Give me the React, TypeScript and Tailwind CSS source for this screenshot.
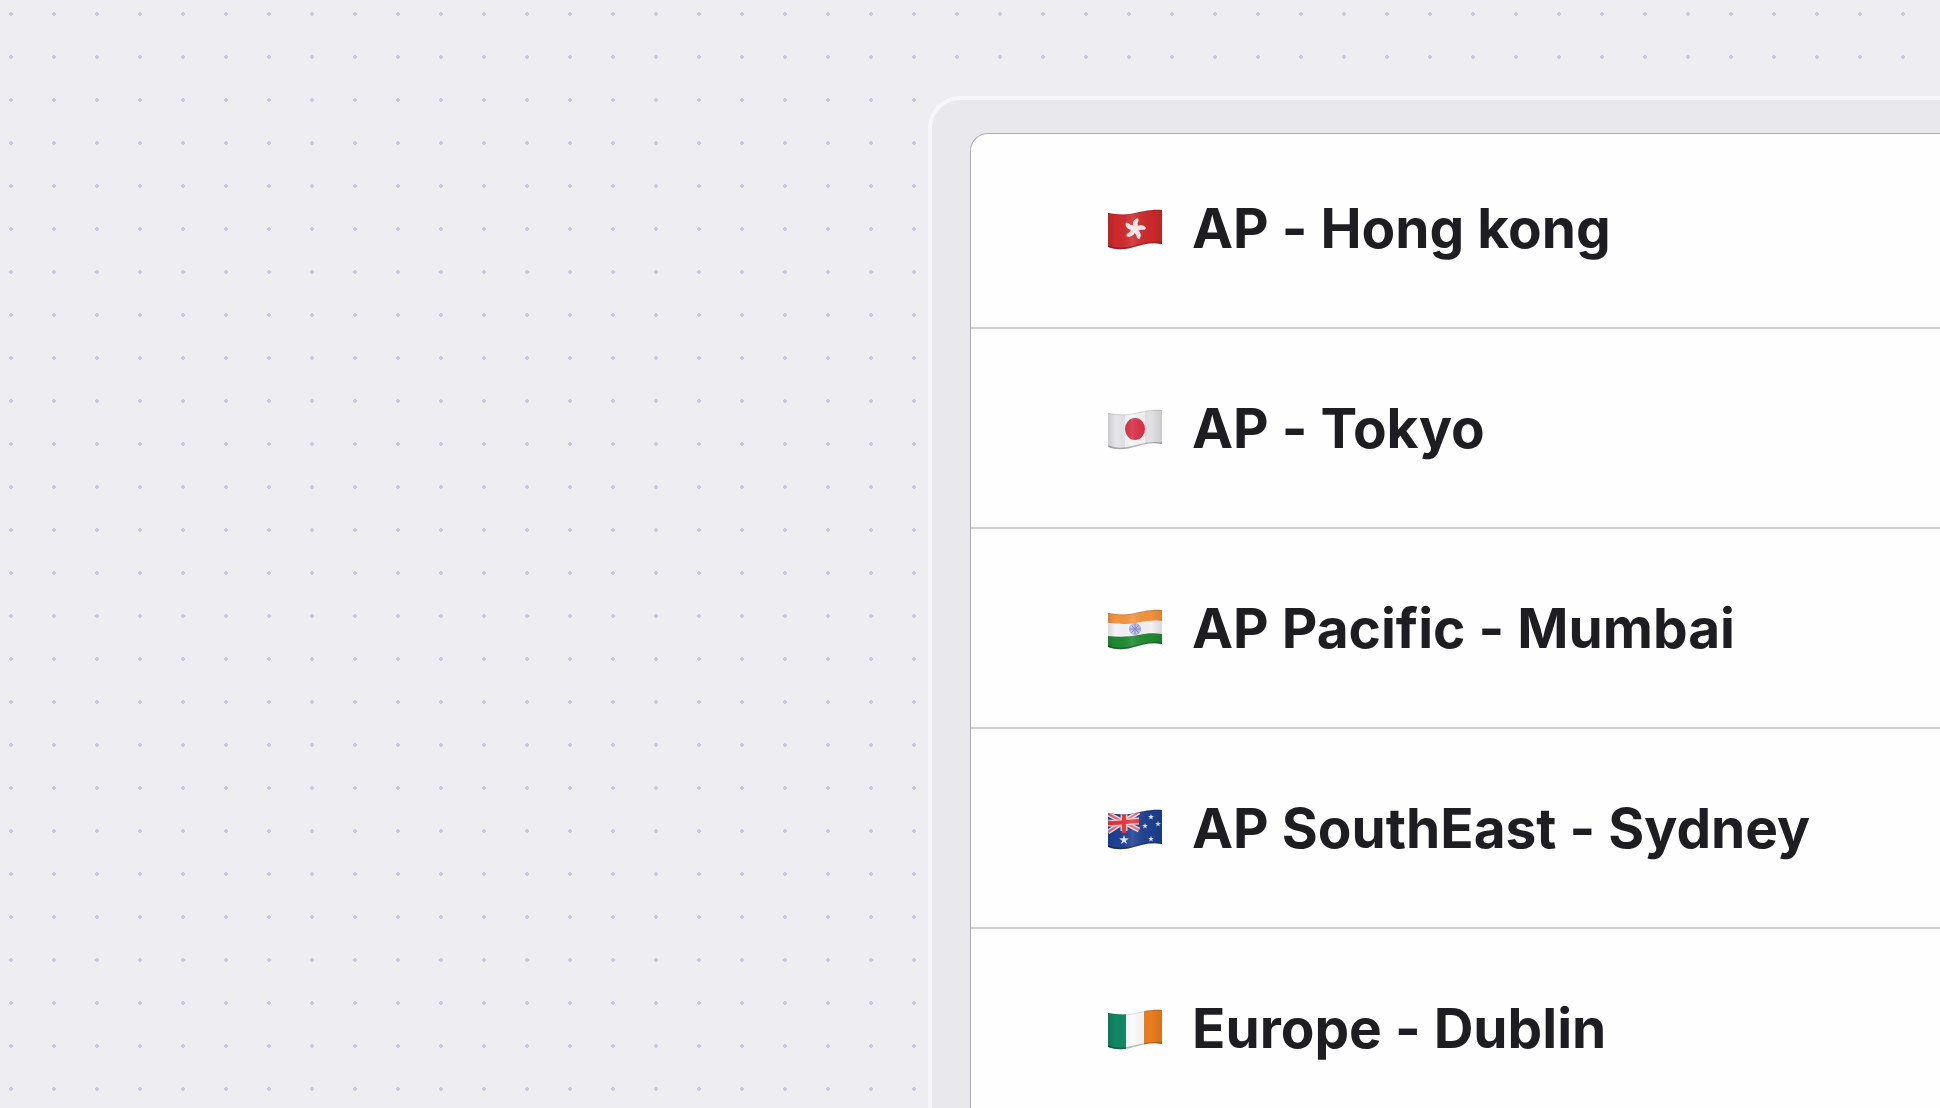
import { useId } from "react";
import type { ReactNode } from "react";

interface Region {
  name: string;
  flag: ReactNode;
}

const STAR = "0,-1 .24,-.33 .95,-.31 .38,.13 .59,.81 0,.4 -.59,.81 -.38,.13 -.95,-.31 -.24,-.33";

const HongKong = () => (
  <>
    <rect width="54" height="44" fill="#cf2a2c" />
    <g fill="#fbe9ea" transform="translate(27 20)">
      {[0, 72, 144, 216, 288].map((angle) => (
        <path
          key={angle}
          d="M0 0C-4 -3 -4 -9 1 -11C4 -9 1 -7 2 -5C3 -3 2 0 0 0Z"
          transform={`rotate(${angle + 8})`}
        />
      ))}
    </g>
  </>
);

const Japan = () => (
  <>
    <rect width="54" height="44" fill="#e6e6e8" />
    <rect x="17" width="20" height="44" fill="#f6f6f7" />
    <ellipse cx="27" cy="20" rx="10" ry="11" fill="#d92b45" />
  </>
);

const India = () => (
  <>
    <rect width="54" height="44" fill="#f5f5fa" />
    <path d="M0 0H54V12C38 10 30 15 18 15C10 15 6 14 0 14Z" fill="#f59440" />
    <path d="M0 27C10 28 20 28 30 26C40 24 46 24 54 25V44H0Z" fill="#1f8b32" />
    <circle cx="27" cy="20" r="5.5" fill="#b9bfe6" stroke="#a3aadc" />
    <path d="M27 15V25M22 20H32M23.5 16.5L30.5 23.5M30.5 16.5L23.5 23.5" stroke="#7480c8" />
  </>
);

const Australia = () => (
  <>
    <rect width="54" height="44" fill="#1f4193" />
    <path d="M0 5L31 21M0 23L31 3" stroke="#e6dfee" strokeWidth="5" />
    <path d="M0 5L31 21M0 23L31 3" stroke="#e96670" strokeWidth="2" />
    <path d="M16 0V22M0 14C12 15 20 12 31 12" fill="none" stroke="#f3c9d0" strokeWidth="7" />
    <path d="M16 0V24M0 14C12 15 20 12 31 12" fill="none" stroke="#e8343d" strokeWidth="4" />
    <g fill="#dfe6f6">
      <polygon points={STAR} transform="translate(16 31) scale(5)" />
      <polygon points={STAR} transform="translate(43 8) scale(3)" />
      <polygon points={STAR} transform="translate(37 17) scale(3)" />
      <polygon points={STAR} transform="translate(50 15) scale(3)" />
      <polygon points={STAR} transform="translate(43 30) scale(3)" />
    </g>
  </>
);

const Ireland = () => (
  <>
    <rect width="54" height="44" fill="#fbfbfb" />
    <rect width="18" height="44" fill="#118664" />
    <rect x="36" width="18" height="44" fill="#ee7f1f" />
  </>
);

const regions: Region[] = [
  { name: "AP - Hong kong", flag: <HongKong /> },
  { name: "AP - Tokyo", flag: <Japan /> },
  { name: "AP Pacific - Mumbai", flag: <India /> },
  { name: "AP SouthEast - Sydney", flag: <Australia /> },
  { name: "Europe - Dublin", flag: <Ireland /> },
];

// Waving cloth outline shared by every flag
const CLOTH = "M0 4C6 5 14 6 22 5C34 3 42 0 54 1V35C42 33 34 36 26 38C16 41 8 41 0 38Z";

function Flag({ children }: { children: ReactNode }) {
  const id = useId();
  return (
    <svg className="mt-1 h-[42px] w-[54px] shrink-0" viewBox="0 0 54 42" aria-hidden="true">
      <defs>
        <clipPath id={`${id}-cloth`}>
          <path d={CLOTH} />
        </clipPath>
        <linearGradient id={`${id}-shade`} x1="0" x2="1" y1="0" y2="0">
          <stop offset="0" stopColor="#000" stopOpacity="0.12" />
          <stop offset="0.15" stopColor="#000" stopOpacity="0" />
          <stop offset="0.45" stopColor="#fff" stopOpacity="0.12" />
          <stop offset="0.8" stopColor="#000" stopOpacity="0.02" />
          <stop offset="1" stopColor="#000" stopOpacity="0.12" />
        </linearGradient>
      </defs>
      <g clipPath={`url(#${id}-cloth)`}>
        {children}
        <rect width="54" height="44" fill={`url(#${id}-shade)`} />
        <path
          d="M0 38C8 41 16 41 26 38C34 36 42 33 54 35"
          fill="none"
          stroke="#000"
          strokeOpacity="0.25"
          strokeWidth="3"
        />
        <path d="M0 4C6 5 14 6 22 5C34 3 42 0 54 1" fill="none" stroke="#000" strokeOpacity="0.1" strokeWidth="2" />
      </g>
    </svg>
  );
}

export default function App() {
  return (
    <main className="h-screen overflow-hidden bg-[#eeedf1] bg-[radial-gradient(circle_at_11px_14px,#cac8e0_2px,transparent_2px)] bg-[size:43px_43px] pt-24 pl-[928px] font-['Inter',sans-serif]">
      <section className="rounded-tl-[32px] border-t-4 border-l-4 border-[#f6f6fb] bg-[#e8e8ed] pt-[33px] pl-[38px]">
        <ul className="rounded-tl-[18px] border-t border-l border-[#adacb3] bg-[#fefefe]">
          {regions.map((region) => (
            <li
              key={region.name}
              className="flex items-center gap-[30px] border-b-2 border-[#d0cfd4] py-[66px] pl-[137px] first:pt-[61px]"
            >
              <Flag>{region.flag}</Flag>
              <span className="text-[55px] leading-[66px] font-bold whitespace-nowrap text-[#1e1d21] [font-feature-settings:'calt'_0]">
                {region.name}
              </span>
            </li>
          ))}
        </ul>
      </section>
    </main>
  );
}
